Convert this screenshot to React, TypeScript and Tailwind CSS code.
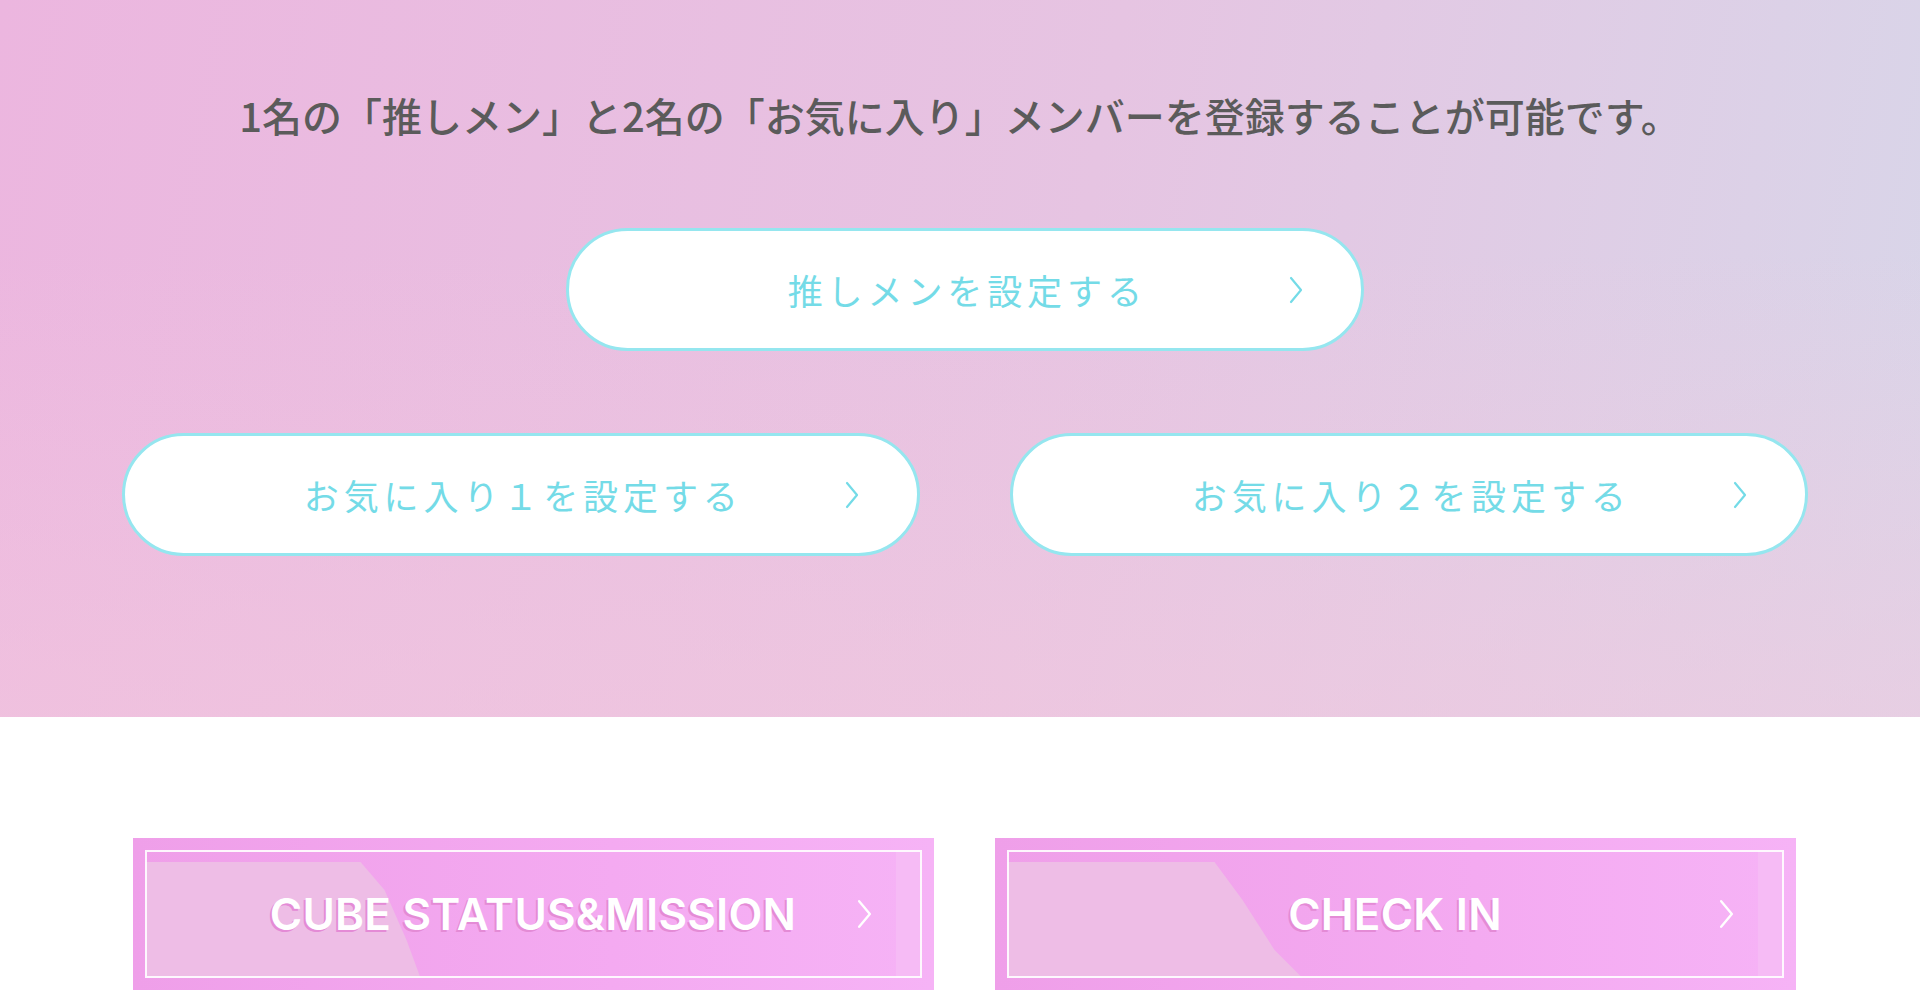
import React from "react";

function Chevron({ className }: { className?: string }) {
  return (
    <svg viewBox="0 0 14 28" className={className} fill="none" stroke="currentColor" strokeWidth={2.2}>
      <polyline points="2,2 12,14 2,26" strokeLinecap="round" strokeLinejoin="round" />
    </svg>
  );
}

function PillButton({ label }: { label: string }) {
  return (
    <a
      href="#"
      className="relative flex h-[123px] w-[798px] items-center justify-center rounded-full border-[3px] border-[#95e6ef] bg-white text-[#74dbe7]"
    >
      <span className="pl-[0.13em] text-[35px] leading-none tracking-[0.14em]">{label}</span>
      <Chevron className="absolute right-[58px] top-1/2 h-[28px] w-[14px] -translate-y-1/2" />
    </a>
  );
}

function CubeButton({ label, edge }: { label: string; edge: string }) {
  return (
    <a
      href="#"
      className="relative flex h-[152px] w-[801px] items-center justify-center overflow-hidden bg-[linear-gradient(90deg,#ef9fe9,#f4aaf1_60%,#f6b3f6)]"
    >
      <div className={`absolute inset-y-[12px] left-[12px] right-[12px] bg-[#eebde6] ${edge}`} />
      <div className="absolute inset-y-[12px] right-[12px] w-[26px] bg-[#f7bff5]/70" />
      <div className="absolute inset-[12px] border-2 border-white/90" />
      <span className="relative font-['Inter',sans-serif] text-[44px] font-semibold leading-none tracking-[0.005em] text-white [text-shadow:-2px_2px_0_#e48bd6]">
        {label}
      </span>
      <Chevron className="absolute right-[62px] top-1/2 h-[30px] w-[15px] -translate-y-1/2 text-white" />
    </a>
  );
}

export default function App() {
  return (
    <div className="min-h-[1005px] bg-white font-['Noto_Sans_CJK_JP','Noto_Sans',sans-serif]">
      <section className="relative bg-[linear-gradient(to_bottom,rgba(243,200,222,0)_35%,rgba(243,200,222,0.55)),linear-gradient(100deg,#ecb6df,#e6c4e2_55%,#d8d6e9)] pb-[161px] pt-[85px]">
        <p className="text-center text-[40px] font-medium leading-[60px] text-[#5b5b5b]">
          1名の「推しメン」と2名の「お気に入り」メンバーを登録することが可能です。
        </p>
        <div className="mt-[83px] flex justify-center pl-[10px]">
          <PillButton label="推しメンを設定する" />
        </div>
        <div className="mt-[82px] flex justify-center gap-[90px] pl-[10px]">
          <PillButton label="お気に入り１を設定する" />
          <PillButton label="お気に入り２を設定する" />
        </div>
      </section>
      <div className="mt-[121px] flex justify-center gap-[61px] pl-[8px]">
        <CubeButton
          label="CUBE STATUS&MISSION"
          edge="[clip-path:polygon(0_12px,216px_12px,240px_40px,262px_90px,276px_128px,0_128px)]"
        />
        <CubeButton
          label="CHECK IN"
          edge="[clip-path:polygon(0_12px,208px_12px,236px_50px,268px_100px,296px_128px,0_128px)]"
        />
      </div>
    </div>
  );
}
